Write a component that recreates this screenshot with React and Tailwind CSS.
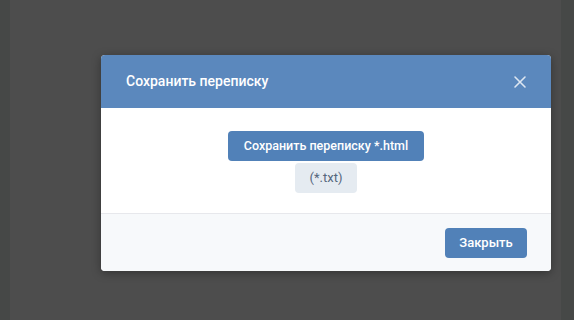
import React from 'react';

const X = () => (
  <svg width="14" height="14" viewBox="0 0 14 14" fill="none">
    <path d="M2 2L12 12M12 2L2 12" stroke="#dde6f1" strokeWidth="1.6" strokeLinecap="round" />
  </svg>
);

export default function App() {
  return (
    <div className="relative w-[574px] h-[320px] flex overflow-hidden font-['Roboto',sans-serif]">
      <div className="w-[10px] bg-[#464847]" />
      <div className="flex-1 bg-[#4d4d4d]" />
      <div className="w-[13px] bg-[#464847]" />

      <div className="absolute left-[101px] top-[55px] w-[450px] rounded-[4px] overflow-hidden bg-white shadow-[0_2px_10px_rgba(0,0,0,0.35)]">
        <div className="h-[53px] bg-[#5b88bd] flex items-center justify-between pl-[25px] pr-[24px]">
          <span className="text-white text-[14px] font-medium">Сохранить переписку</span>
          <button className="w-[14px] h-[14px] flex items-center justify-center">
            <X />
          </button>
        </div>
        <div className="flex flex-col items-center gap-[2px] pt-[23px] pb-[20px]">
          <button className="h-[30px] px-[16px] rounded-[4px] bg-[#5181b8] text-white text-[12.5px] font-medium">
            Сохранить переписку *.html
          </button>
          <button className="h-[30px] px-[15px] rounded-[4px] bg-[#e5ebf1] text-[#55677d] text-[13px]">
            (*.txt)
          </button>
        </div>
        <div className="h-[58px] bg-[#f7f9fb] border-t border-[#e7e8ec] flex items-start justify-end pt-[14px] pr-[24px]">
          <button className="h-[30px] w-[82px] rounded-[4px] bg-[#5181b8] text-white text-[13px] font-medium">
            Закрыть
          </button>
        </div>
      </div>
    </div>
  );
}
